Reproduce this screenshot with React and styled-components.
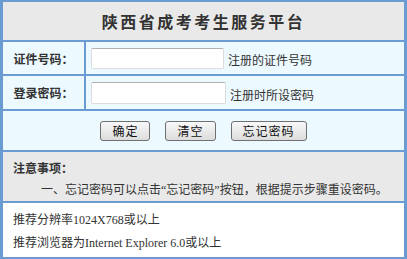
import styled, { createGlobalStyle } from 'styled-components';

const GlobalStyle = createGlobalStyle`
    body {
        margin: 0;
        background: #fff;
        font-family: "Liberation Serif", "Noto Sans CJK SC", serif;
        font-size: 12px;
        color: #333;
    }
`

const Panel = styled.div`
    width: 407px;
    height: 259px;
    box-sizing: border-box;
    border: 3px solid #6b9bd3;
    border-top-width: 2px;
    border-bottom-width: 2px;
    display: flex;
    flex-direction: column;
`
const Title = styled.h1`
    margin: 0;
    height: 38px;
    display: flex;
    align-items: center;
    justify-content: center;
    background-color: #e9e9e9;
    border-bottom: 2px solid #6b9bd3;
    font-family: "Noto Sans CJK SC", sans-serif;
    font-size: 16px;
    font-weight: 700;
    letter-spacing: 2.5px;
    color: #333;
`
const Row = styled.div`
    display: grid;
    grid-template-columns: 83px 1fr;
    height: ${props => props.h}px;
    background-color: #ecf9fe;
    border-bottom: 2px solid #6b9bd3;
`
const Label = styled.div`
    display: flex;
    align-items: center;
    justify-content: center;
    border-right: 2px solid #6b9bd3;
    font-family: "Noto Sans CJK SC", sans-serif;
    font-size: 12px;
    font-weight: 700;
    color: #333;
`
const Field = styled.div`
    display: flex;
    align-items: center;
    padding-left: 5px;
    gap: 4px;
`
const Input = styled.input`
    box-sizing: border-box;
    width: ${props => props.w}px;
    height: ${props => props.h}px;
    margin: 0;
    padding: 0 3px;
    border: 1px solid #dcdcdc;
    border-top-color: #b0b0b0;
    border-radius: 2px;
    background: #fff;
    outline: none;
`
const Hint = styled.span`
    font-family: "Noto Sans CJK SC", sans-serif;
    font-size: 12px;
    color: #333;
    margin-top: ${props => props.top || 0}px;
`
const ButtonRow = styled.div`
    height: 39px;
    display: flex;
    align-items: center;
    justify-content: center;
    gap: 15px;
    background-color: #ecf9fe;
    border-bottom: 2px solid #6b9bd3;
`
const Button = styled.button`
    height: 20px;
    margin: 0;
    padding: 0 11px;
    border: 1px solid #707070;
    border-radius: 3px;
    background: linear-gradient(#f8f8f8, #dcdcdc);
    font-family: "Noto Sans CJK SC", sans-serif;
    font-size: 12px;
    line-height: 18px;
    color: #111;
    letter-spacing: 1px;
`
const Notice = styled.div`
    height: 51px;
    box-sizing: border-box;
    padding: 5px 0 0 10px;
    background-color: #e9e9e9;
    border-bottom: 2px solid #6b9bd3;
    font-family: "Liberation Serif", "Noto Sans CJK SC", serif;
    line-height: 22px;
`
const NoticeTitle = styled.div`
    font-family: "Noto Sans CJK SC", sans-serif;
    font-weight: 700;
`
const NoticeItem = styled.div`
    text-indent: 28px;
`
const Footer = styled.div`
    flex: 1;
    box-sizing: border-box;
    padding: 6px 0 0 10px;
    background: #fff;
    line-height: 23px;
`

const App = () => {
    return (
        <>
            <GlobalStyle />
            <Panel>
                <Title>陕西省成考考生服务平台</Title>
                <Row h={32}>
                    <Label>证件号码：</Label>
                    <Field>
                        <Input w={133} h={21} type="text" />
                        <Hint top={2}>注册的证件号码</Hint>
                    </Field>
                </Row>
                <Row h={33}>
                    <Label>登录密码：</Label>
                    <Field>
                        <Input w={135} h={22} type="password" />
                        <Hint top={4}>注册时所设密码</Hint>
                    </Field>
                </Row>
                <ButtonRow>
                    <Button>确定</Button>
                    <Button>清空</Button>
                    <Button>忘记密码</Button>
                </ButtonRow>
                <Notice>
                    <NoticeTitle>注意事项：</NoticeTitle>
                    <NoticeItem>一、忘记密码可以点击“忘记密码”按钮，根据提示步骤重设密码。</NoticeItem>
                </Notice>
                <Footer>
                    <div>推荐分辨率1024X768或以上</div>
                    <div>推荐浏览器为Internet Explorer 6.0或以上</div>
                </Footer>
            </Panel>
        </>
    )
}

export default App
